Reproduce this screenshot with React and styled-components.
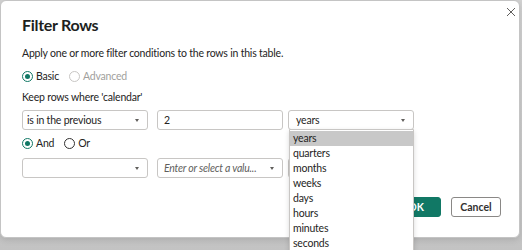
import styled, { createGlobalStyle } from "styled-components";

const GlobalStyle = createGlobalStyle`
  html, body {
    margin: 0;
    padding: 0;
    background: #c6c6c6;
    font-family: Lato, "Open Sans", sans-serif;
    color: #252423;
  }
`;

const GREEN = "#117865";

const UNITS = [
  "years",
  "quarters",
  "months",
  "weeks",
  "days",
  "hours",
  "minutes",
  "seconds",
];

const Page = styled.div`
  position: relative;
  width: 522px;
  height: 250px;
  overflow: hidden;
  background: linear-gradient(#d2d2d2, #c3c3c3);
  letter-spacing: -0.2px;
`;

const Dialog = styled.div`
  position: relative;
  box-sizing: border-box;
  width: 520px;
  height: 238px;
  background: white;
  border: 1px solid #c4c4c4;
  border-radius: 6px;
  padding: 12px 18px 0 21px;
  box-shadow: 0 2px 6px rgba(0, 0, 0, 0.12);
`;

const CloseButton = styled.button`
  position: absolute;
  top: 6px;
  right: 3px;
  width: 10px;
  height: 10px;
  padding: 0;
  border: none;
  background: none;
  display: flex;
`;

const Title = styled.h1`
  margin: 0;
  font-size: 16px;
  line-height: 24px;
  font-weight: 700;
  letter-spacing: -0.3px;
  color: #201f1e;
`;

const Description = styled.p`
  margin: 8px 0 0;
  font-size: 10.5px;
  line-height: 16px;
`;

const Label = styled.div`
  margin-top: 5px;
  font-size: 10.5px;
  line-height: 16px;
`;

const RadioRow = styled.div`
  display: flex;
  align-items: center;
  gap: 10px;
  height: 16px;
  margin-top: ${(p) => p.$top}px;
`;

const RadioOption = styled.label`
  display: flex;
  align-items: center;
  gap: 3px;
  font-size: 10.5px;
  color: ${(p) => (p.$disabled ? "#a19f9d" : "#252423")};
`;

const RadioCircle = styled.span`
  box-sizing: border-box;
  width: 11px;
  height: 11px;
  border-radius: 50%;
  border: 1px solid
    ${(p) => (p.$checked ? GREEN : p.$disabled ? "#c8c6c4" : "#323130")};
  display: flex;
  align-items: center;
  justify-content: center;

  &::after {
    content: "";
    width: 5px;
    height: 5px;
    border-radius: 50%;
    background: ${(p) => (p.$checked ? GREEN : "transparent")};
  }
`;

const FieldRow = styled.div`
  display: flex;
  margin-top: ${(p) => p.$top}px;
`;

const Field = styled.div`
  box-sizing: border-box;
  flex: none;
  width: 126px;
  height: 20px;
  margin-right: ${(p) => p.$gap || 0}px;
  border: 1px solid #c8c6c4;
  border-radius: 3px;
  display: flex;
  align-items: center;
  justify-content: space-between;
  gap: 6px;
  padding: 0 8px 0 ${(p) => p.$pad || 5}px;
  font-size: 10.5px;
  white-space: nowrap;
  overflow: hidden;
  color: ${(p) => (p.$placeholder ? "#605e5c" : "#252423")};
  font-style: ${(p) => (p.$placeholder ? "italic" : "normal")};
  background: white;
`;

const Caret = styled.span`
  flex: none;
  width: 0;
  height: 0;
  border-left: 2px solid transparent;
  border-right: 2px solid transparent;
  border-top: 3px solid #605e5c;
`;

const Footer = styled.div`
  display: flex;
  justify-content: flex-end;
  gap: 10px;
  margin-top: 19px;
`;

const Button = styled.button`
  box-sizing: border-box;
  width: 50px;
  height: 20px;
  border-radius: 3px;
  font-family: inherit;
  font-size: 10.5px;
  font-weight: 700;
  border: 1px solid ${(p) => (p.$primary ? GREEN : "#8a8886")};
  background: ${(p) => (p.$primary ? GREEN : "white")};
  color: ${(p) => (p.$primary ? "white" : "#323130")};
`;

const Menu = styled.ul`
  position: absolute;
  left: 289px;
  top: 129px;
  box-sizing: border-box;
  width: 125px;
  margin: 0;
  padding: 1px 0 3px;
  list-style: none;
  background: white;
  border: 1px solid #c8c6c4;
  border-radius: 0 0 4px 4px;
  box-shadow: 0 2px 5px rgba(0, 0, 0, 0.15);
`;

const MenuItem = styled.li`
  height: 15px;
  line-height: 15px;
  padding-left: 3px;
  font-size: 10.5px;
  color: #252423;
  background: ${(p) => (p.$active ? "#c8c8c8" : "transparent")};
`;

function Radio({ label, checked, disabled }) {
  return (
    <RadioOption $disabled={disabled}>
      <RadioCircle $checked={checked} $disabled={disabled} />
      {label}
    </RadioOption>
  );
}

export default function App() {
  return (
    <Page>
      <GlobalStyle />
      <Dialog>
        <CloseButton aria-label="Close">
          <svg width="10" height="10" viewBox="0 0 10 10">
            <path
              d="M1 1 L9 9 M9 1 L1 9"
              stroke="#605e5c"
              strokeWidth="1"
              fill="none"
            />
          </svg>
        </CloseButton>
        <Title>Filter Rows</Title>
        <Description>
          Apply one or more filter conditions to the rows in this table.
        </Description>
        <RadioRow $top={7}>
          <Radio label="Basic" checked />
          <Radio label="Advanced" disabled />
        </RadioRow>
        <Label>Keep rows where 'calendar'</Label>
        <FieldRow $top={5}>
          <Field $gap={9} $pad={4}>
            is in the previous
            <Caret />
          </Field>
          <Field $gap={5} $pad={6}>
            2
          </Field>
          <Field $pad={7}>
            years
            <Caret />
          </Field>
        </FieldRow>
        <RadioRow $top={5}>
          <Radio label="And" checked />
          <Radio label="Or" />
        </RadioRow>
        <FieldRow $top={7}>
          <Field $gap={9}>
            <span />
            <Caret />
          </Field>
          <Field $gap={5} $pad={6} $placeholder>
            Enter or select a valu...
            <Caret />
          </Field>
          <Field>
            <span />
            <Caret />
          </Field>
        </FieldRow>
        <Footer>
          <Button $primary>OK</Button>
          <Button>Cancel</Button>
        </Footer>
      </Dialog>
      <Menu>
        {UNITS.map((unit, idx) => (
          <MenuItem key={unit} $active={idx === 0}>
            {unit}
          </MenuItem>
        ))}
      </Menu>
    </Page>
  );
}
